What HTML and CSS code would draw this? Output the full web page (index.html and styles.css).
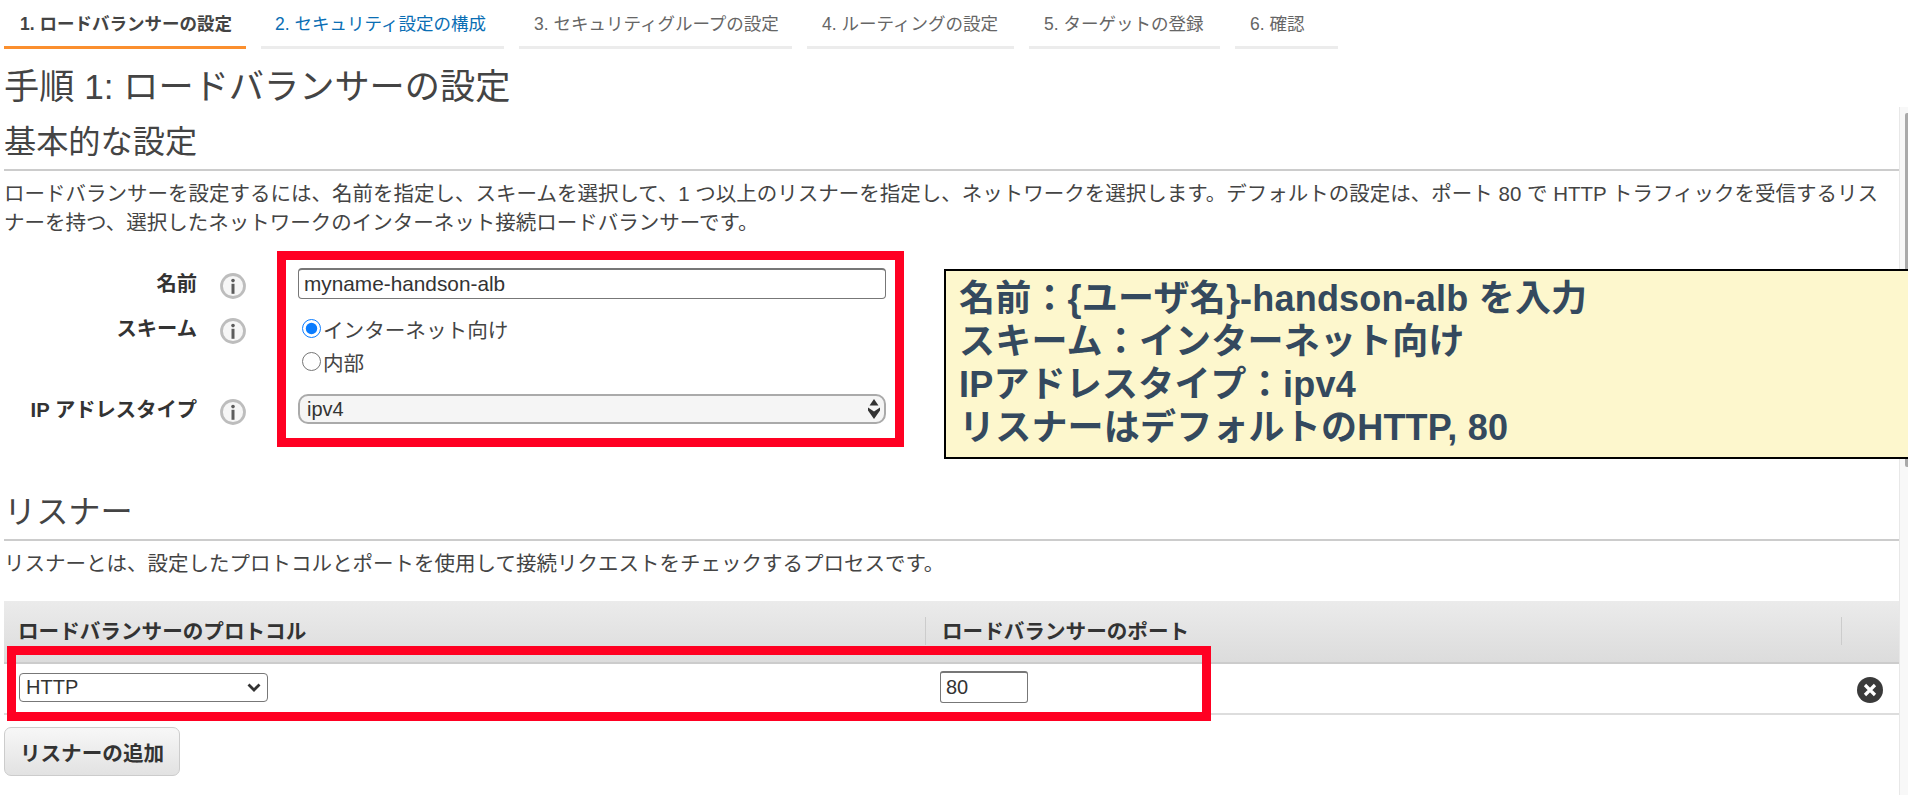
FILE: index.html
```html
<!DOCTYPE html>
<html lang="ja">
<head>
    <meta charset="UTF-8">
    <meta name="viewport" content="width=device-width, initial-scale=1.0">
    <title>手順 1: ロードバランサーの設定</title>
    <link rel="stylesheet" href="styles.css">
</head>
<body>
    <div class="page">
        <nav class="tabs">
            <div class="tab active">1. ロードバランサーの設定</div>
            <div class="tab next">2. セキュリティ設定の構成</div>
            <div class="tab">3. セキュリティグループの設定</div>
            <div class="tab">4. ルーティングの設定</div>
            <div class="tab">5. ターゲットの登録</div>
            <div class="tab">6. 確認</div>
        </nav>

        <h1 class="page-title">手順 1: ロードバランサーの設定</h1>

        <h2 class="section-title">基本的な設定</h2>
        <p class="section-text">ロードバランサーを設定するには、名前を指定し、スキームを選択して、1 つ以上のリスナーを指定し、ネットワークを選択します。デフォルトの設定は、ポート 80 で HTTP トラフィックを受信するリスナーを持つ、選択したネットワークのインターネット接続ロードバランサーです。</p>

        <div class="form-grid">
            <label class="form-label">名前</label>
            <svg class="info-icon" viewBox="0 0 26 26"><circle cx="13" cy="13" r="11.5" fill="#f6f6f6" stroke="#bdbdbd" stroke-width="2.8"/><circle cx="13" cy="7.6" r="1.8" fill="#5c5c5c"/><rect x="11.5" y="10.8" width="3" height="10" fill="#5c5c5c"/></svg>
            <input class="text-input" type="text" value="myname-handson-alb">

            <label class="form-label">スキーム</label>
            <svg class="info-icon" viewBox="0 0 26 26"><circle cx="13" cy="13" r="11.5" fill="#f6f6f6" stroke="#bdbdbd" stroke-width="2.8"/><circle cx="13" cy="7.6" r="1.8" fill="#5c5c5c"/><rect x="11.5" y="10.8" width="3" height="10" fill="#5c5c5c"/></svg>
            <div class="radio-group">
                <label class="radio-row"><input type="radio" name="scheme" checked>インターネット向け</label>
                <label class="radio-row"><input type="radio" name="scheme">内部</label>
            </div>

            <label class="form-label">IP アドレスタイプ</label>
            <svg class="info-icon" viewBox="0 0 26 26"><circle cx="13" cy="13" r="11.5" fill="#f6f6f6" stroke="#bdbdbd" stroke-width="2.8"/><circle cx="13" cy="7.6" r="1.8" fill="#5c5c5c"/><rect x="11.5" y="10.8" width="3" height="10" fill="#5c5c5c"/></svg>
            <div class="select-wrap">
                <select class="ip-select"><option>ipv4</option></select>
                <svg class="updown" viewBox="0 0 14 20"><path d="M7 0 L11.5 6.5 H2.5 Z" fill="#333"/><path d="M1 8.5 L7 12.5 L13 8.5 L13 11.5 L7 20 L1 11.5 Z" fill="#333"/></svg>
            </div>
        </div>

        <h2 class="section-title listener-title">リスナー</h2>
        <p class="section-text">リスナーとは、設定したプロトコルとポートを使用して接続リクエストをチェックするプロセスです。</p>

        <div class="listener-table">
            <div class="table-head">
                <div class="head-cell">ロードバランサーのプロトコル</div>
                <div class="head-cell">ロードバランサーのポート</div>
                <div class="head-cell"></div>
            </div>
            <div class="table-row">
                <div class="row-cell">
                    <div class="select-wrap protocol">
                        <select class="protocol-select"><option>HTTP</option></select>
                        <svg class="chevron" viewBox="0 0 14 9"><path d="M1.5 1.5 L7 7 L12.5 1.5" fill="none" stroke="#333" stroke-width="2.8"/></svg>
                    </div>
                </div>
                <div class="row-cell port-cell"><input class="port-input" type="text" value="80"></div>
                <div class="row-cell close-cell">
                    <svg class="close-icon" viewBox="0 0 26 26"><circle cx="13" cy="13" r="13" fill="#3a3a3a"/><path d="M8 8 L18 18 M18 8 L8 18" stroke="#fff" stroke-width="3.2"/></svg>
                </div>
            </div>
        </div>

        <button class="add-button">リスナーの追加</button>
    </div>

    <!-- 説明用の注釈 -->
    <div class="scrollbar"><div class="scrollbar-thumb"></div></div>
    <div class="mark mark-form"></div>
    <div class="mark mark-row"></div>
    <div class="note">
        名前：{ユーザ名}-handson-alb を入力<br>
        スキーム：インターネット向け<br>
        IPアドレスタイプ：ipv4<br>
        リスナーはデフォルトのHTTP, 80
    </div>
</body>
</html>
```

FILE: styles.css
```css
* {
    box-sizing: border-box;
}
html, body {
    height: 100%;
}
body {
    position: relative;
    margin: 0;
    overflow: hidden;
    background-color: #fff;
    color: #444;
    font-family: "Liberation Sans", "Noto Sans CJK JP", sans-serif;
    font-size: 20.6px;
}
.page {
    padding-left: 4px;
    margin-right: 9px;
}

/* tabs */
.tabs {
    display: grid;
    grid-template-columns: 242px 243px 273px 207px 191px 103px;
    column-gap: 15px;
}
.tab {
    padding: 12px 0 9px 15px;
    border-bottom: 3px solid #ececec;
    color: #666;
    font-size: 17.5px;
    line-height: 25px;
    white-space: nowrap;
}
.tab.active {
    padding-left: 16px;
    border-bottom-color: #fb8f2e;
    color: #444;
    font-weight: bold;
}
.tab.next {
    padding-left: 14px;
    color: #0a6eb4;
}

/* headings */
.page-title {
    margin: 18px 0 0;
    font-size: 35.2px;
    font-weight: normal;
    line-height: 40px;
}
.section-title {
    margin: 15px 0 0;
    padding-bottom: 7px;
    border-bottom: 2px solid #ccc;
    font-size: 32.2px;
    font-weight: normal;
    line-height: 40px;
}
.listener-title {
    margin-top: 67px;
}
.section-text {
    margin: 8px 0 0;
    padding-right: 12px;
    font-size: 20.5px;
    line-height: 29px;
}

/* form */
.form-grid {
    display: grid;
    grid-template-columns: 193px 101px 588px;
    row-gap: 14px;
    margin-top: 31px;
}
.form-label {
    padding-top: 2px;
    color: #333;
    font-size: 20.3px;
    font-weight: bold;
    text-align: right;
    line-height: 28px;
    white-space: nowrap;
}
.info-icon {
    width: 26px;
    height: 26px;
    margin: 5px 0 0 23px;
}
.text-input {
    height: 31px;
    padding: 0 5px;
    border: 1px solid #777;
    border-top-width: 2px;
    border-radius: 4px;
    color: #333;
    font: inherit;
    font-size: 20.8px;
}
.radio-group {
    margin: -1px 0 2px;
}
.radio-row {
    display: flex;
    align-items: center;
    height: 33px;
}
.radio-row input {
    width: 19px;
    height: 19px;
    margin: 0 2px 0 4px;
    accent-color: #0a7cff;
}
.select-wrap {
    position: relative;
}
.ip-select {
    display: block;
    width: 100%;
    height: 30px;
    padding: 0 7px;
    border: 2px solid #aaa;
    border-radius: 10px;
    background-color: #f5f5f5;
    color: #333;
    font: inherit;
    font-size: 20px;
    appearance: none;
}
.updown {
    position: absolute;
    top: 5px;
    right: 5px;
    width: 14px;
    height: 20px;
}

/* listener table */
.listener-table {
    margin-top: 23px;
}
.table-head, .table-row {
    display: grid;
    grid-template-columns: 921px 916px 58px;
}
.table-head {
    height: 63px;
    padding-top: 16px;
    border-bottom: 2px solid #ccc;
    background: linear-gradient(#ebebeb, #dcdcdc);
}
.head-cell {
    height: 28px;
    padding-left: 16px;
    border-left: 1px solid #ccc;
    color: #333;
    font-weight: bold;
    line-height: 30px;
}
.head-cell:first-child {
    padding-left: 14px;
    border-left: none;
}
.table-row {
    height: 51px;
    border-bottom: 2px solid #ddd;
}
.row-cell {
    display: flex;
    align-items: center;
    padding-left: 15px;
    padding-bottom: 3px;
}
.protocol {
    width: 249px;
}
.protocol-select {
    display: block;
    width: 100%;
    height: 29px;
    padding: 0 6px;
    border: 1px solid #777;
    border-radius: 4px;
    background-color: #fff;
    color: #333;
    font: inherit;
    font-size: 20px;
    appearance: none;
}
.chevron {
    position: absolute;
    top: 10px;
    right: 7px;
    width: 14px;
    height: 9px;
}
.port-input {
    width: 88px;
    height: 32px;
    padding: 0 5px;
    border: 1px solid #777;
    border-top-width: 2px;
    border-radius: 3px;
    color: #333;
    font: inherit;
    font-size: 20px;
}
.close-cell {
    padding: 3px 0 0 16px;
}
.close-icon {
    width: 26px;
    height: 26px;
}
.add-button {
    display: block;
    width: 176px;
    height: 49px;
    margin-top: 12px;
    border: 1px solid #ccc;
    border-radius: 7px;
    background: linear-gradient(#f7f7f7, #e2e2e2);
    color: #333;
    font: inherit;
    font-weight: bold;
}

/* overlays */
.scrollbar {
    position: absolute;
    top: 107px;
    right: 0;
    bottom: 0;
    width: 9px;
    border-left: 1px solid #e8e8e8;
    background-color: #f8f8f8;
}
.scrollbar-thumb {
    width: 3px;
    height: 354px;
    margin: 6px 0 0 5px;
    border-radius: 2px 0 0 2px;
    background-color: #aaa;
}
.mark {
    position: absolute;
    border: 9px solid #ff0022;
}
.mark-form {
    top: 251px;
    left: 277px;
    width: 627px;
    height: 196px;
}
.mark-row {
    top: 646px;
    left: 7px;
    width: 1204px;
    height: 75px;
}
.note {
    position: absolute;
    top: 269px;
    left: 944px;
    right: 0;
    height: 190px;
    padding: 6px 0 0 13px;
    border: 2px solid #000;
    border-right: none;
    background-color: #fdf7cd;
    color: #34495e;
    font-size: 36px;
    font-weight: bold;
    line-height: 43px;
    letter-spacing: 0.2px;
    white-space: nowrap;
}
```
